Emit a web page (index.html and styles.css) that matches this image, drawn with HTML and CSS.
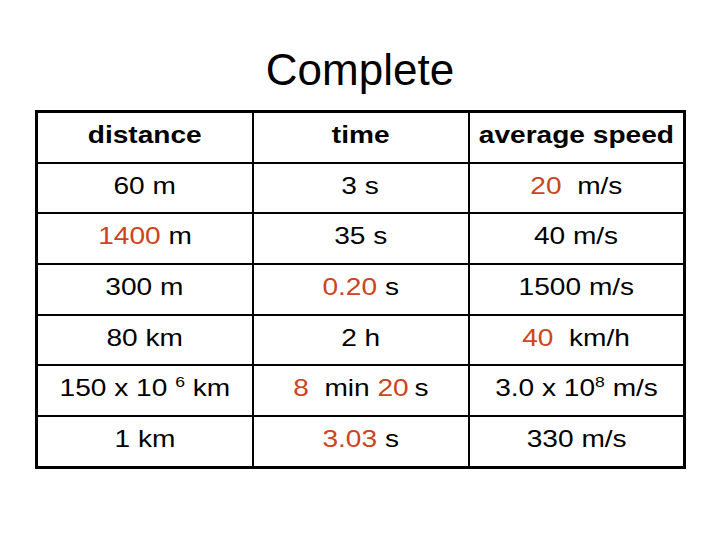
FILE: index.html
```html
<!DOCTYPE html>
<html lang="en">
<head>
    <meta charset="UTF-8">
    <meta name="viewport" content="width=device-width, initial-scale=1.0">
    <title>Complete</title>
    <link rel="stylesheet" href="styles.css">
</head>
<body>

<div class="page">
    <h1>Complete</h1>

    <!-- speed table -->
    <table class="speed-table">
        <tr>
            <th><span class="txt">distance</span></th>
            <th><span class="txt">time</span></th>
            <th><span class="txt">average speed</span></th>
        </tr>
        <tr>
            <td><span class="txt">60 m</span></td>
            <td><span class="txt">3 s</span></td>
            <td><span class="txt"><span class="ans">20</span>&nbsp; m/s</span></td>
        </tr>
        <tr>
            <td><span class="txt"><span class="ans">1400</span> m</span></td>
            <td><span class="txt">35 s</span></td>
            <td><span class="txt">40 m/s</span></td>
        </tr>
        <tr>
            <td><span class="txt">300 m</span></td>
            <td><span class="txt"><span class="ans">0.20</span> s</span></td>
            <td><span class="txt">1500 m/s</span></td>
        </tr>
        <tr>
            <td><span class="txt">80 km</span></td>
            <td><span class="txt">2 h</span></td>
            <td><span class="txt"><span class="ans">40</span>&nbsp; km/h</span></td>
        </tr>
        <tr>
            <td><span class="txt">150 x 10 <sup>6</sup> km</span></td>
            <td><span class="txt"><span class="ans">8</span>&nbsp; min <span class="ans">20</span><span class="tight">s</span></span></td>
            <td><span class="txt">3.0 x 10<sup>8</sup> m/s</span></td>
        </tr>
        <tr>
            <td><span class="txt">1 km</span></td>
            <td><span class="txt"><span class="ans">3.03</span> s</span></td>
            <td><span class="txt">330 m/s</span></td>
        </tr>
    </table>
</div>

</body>
</html>
```

FILE: styles.css
```css
body {
    font-family: "Liberation Sans", Arial, sans-serif;
    background-color: white;
    color: black;
    margin: 0;
}

.page {
    width: 720px;
    height: 540px;
    overflow: hidden;
}

h1 {
    font-size: 44px;
    font-weight: normal;
    text-align: center;
    margin: 45px 0 16px;
    line-height: 49px;
}

.speed-table {
    width: 651px;
    margin-left: 35px;
    border-collapse: collapse;
    table-layout: fixed;
    border: 3px solid black;
}

.speed-table th,
.speed-table td {
    border: 2px solid black;
    height: 43.7px;
    padding: 0 0 5px;
    text-align: center;
    vertical-align: middle;
    font-size: 24px;
    white-space: nowrap;
}

.speed-table th {
    font-weight: bold;
}

/* the slide text is drawn a bit wider than plain Arial */
.txt {
    display: inline-block;
    transform: scaleX(1.17);
}

.tight {
    margin-left: 5px;
}

.speed-table sup {
    font-size: 15px;
    line-height: 0;
    vertical-align: 9px;
}

.ans {
    color: #cc4420;
}
```
